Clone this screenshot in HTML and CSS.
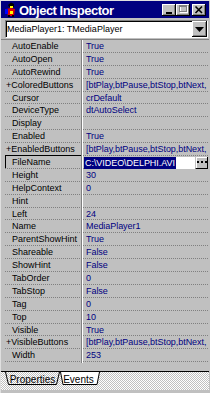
FILE: index.html
```html
<!DOCTYPE html>
<html>
<head>
<meta charset="utf-8">
<link rel="stylesheet" href="styles.css">
</head>
<body>
<div class="win">
  <div class="titlebar">
    <svg class="ticon" width="15" height="15" viewBox="0 0 15 15">
      <path d="M5 3 L8 0.5 L11 2 L11 5 L6 5 Z" fill="#000"/>
      <rect x="7" y="4" width="3" height="2" fill="#ff0"/>
      <path d="M3 7 L8 6 L12 7 L11 14 L5 14 Z" fill="#e00000"/>
      <rect x="2" y="7" width="3" height="5" fill="#0000ff"/>
      <rect x="7" y="9" width="3" height="3" fill="#ff0"/>
      <rect x="5" y="13" width="2" height="2" fill="#000"/>
      <rect x="9" y="13" width="2" height="2" fill="#000"/>
    </svg>
    <span class="title">Object Inspector</span>
    <div class="tbtns">
      <span class="tb"><svg width="14" height="12" viewBox="0 0 14 12"><rect x="4" y="8" width="6" height="2" fill="#000"/></svg></span>
      <span class="tb"><svg width="14" height="12" viewBox="0 0 14 12"><rect x="4.5" y="2.5" width="7" height="6" fill="none" stroke="#fff"/><rect x="3.5" y="1.5" width="7" height="6" fill="none" stroke="#808080"/><line x1="3" y1="2.5" x2="11" y2="2.5" stroke="#808080"/></svg></span>
      <span class="tb tb-close"><svg width="14" height="12" viewBox="0 0 14 12"><path d="M3.5 2.5 L10 9 M10 2.5 L3.5 9" stroke="#000" stroke-width="1.6"/></svg></span>
    </div>
  </div>
  <div class="combo-row">
    <div class="combo">
      <span class="combo-text">MediaPlayer1: TMediaPlayer</span>
      <span class="drop"><svg width="9" height="5" viewBox="0 0 9 5"><path d="M0 0 H9 L4.5 5 Z" fill="#000"/></svg></span>
    </div>
  </div>
  <div class="grid">
    <div class="row"><div class="name">AutoEnable</div><div class="val">True</div></div>
    <div class="row"><div class="name">AutoOpen</div><div class="val">True</div></div>
    <div class="row"><div class="name">AutoRewind</div><div class="val">True</div></div>
    <div class="row"><div class="name exp">+ColoredButtons</div><div class="val">[btPlay,btPause,btStop,btNext,</div></div>
    <div class="row"><div class="name">Cursor</div><div class="val">crDefault</div></div>
    <div class="row"><div class="name">DeviceType</div><div class="val">dtAutoSelect</div></div>
    <div class="row"><div class="name">Display</div><div class="val"></div></div>
    <div class="row"><div class="name">Enabled</div><div class="val">True</div></div>
    <div class="row"><div class="name exp">+EnabledButtons</div><div class="val">[btPlay,btPause,btStop,btNext,</div></div>
    <div class="row sel"><div class="name">FileName</div><div class="val"><div class="editor"><div class="edit"><span class="hl">C:\VIDEO\DELPHI.AVI</span></div><span class="ell"><svg width="10" height="3" viewBox="0 0 10 3"><rect x="0" y="0" width="2" height="2" fill="#000"/><rect x="4" y="0" width="2" height="2" fill="#000"/><rect x="8" y="0" width="2" height="2" fill="#000"/></svg></span></div></div></div>
    <div class="row"><div class="name">Height</div><div class="val">30</div></div>
    <div class="row"><div class="name">HelpContext</div><div class="val">0</div></div>
    <div class="row"><div class="name">Hint</div><div class="val"></div></div>
    <div class="row"><div class="name">Left</div><div class="val">24</div></div>
    <div class="row"><div class="name">Name</div><div class="val">MediaPlayer1</div></div>
    <div class="row"><div class="name">ParentShowHint</div><div class="val">True</div></div>
    <div class="row"><div class="name">Shareable</div><div class="val">False</div></div>
    <div class="row"><div class="name">ShowHint</div><div class="val">False</div></div>
    <div class="row"><div class="name">TabOrder</div><div class="val">0</div></div>
    <div class="row"><div class="name">TabStop</div><div class="val">False</div></div>
    <div class="row"><div class="name">Tag</div><div class="val">0</div></div>
    <div class="row"><div class="name">Top</div><div class="val">10</div></div>
    <div class="row"><div class="name">Visible</div><div class="val">True</div></div>
    <div class="row"><div class="name exp">+VisibleButtons</div><div class="val">[btPlay,btPause,btStop,btNext,</div></div>
    <div class="row"><div class="name">Width</div><div class="val">253</div></div>
  </div>
  <div class="gap"></div>
  <div class="tabbar">
    <div class="tab tab-props">
      <svg width="55" height="13" viewBox="0 0 55 13"><polyline points="0.5,0 3.5,12.5 51.5,12.5 54.5,0" fill="none" stroke="#000"/></svg>
      <span class="tab-label">Properties</span>
    </div>
    <div class="tab tab-events">
      <svg width="40" height="13" viewBox="0 0 40 13"><polygon points="0,0 3,12.5 37,12.5 40,0" fill="#fff"/><polyline points="0.5,0 3,12.5 37,12.5 39.5,0" fill="none" stroke="#000"/></svg>
      <span class="tab-label">Events</span>
    </div>
  </div>
</div>
</body>
</html>
```
FILE: styles.css
```css
* { box-sizing: border-box; }
html, body { margin: 0; padding: 0; }
body {
  width: 210px;
  height: 393px;
  overflow: hidden;
  background: #c0c0c0;
  font-family: "Liberation Sans", Arial, sans-serif;
}
.win {
  width: 210px;
  height: 393px;
  padding: 1px 1px 3px;
  display: flex;
  flex-direction: column;
  background: #c0c0c0;
  box-shadow: inset 1px 1px #dfdfdf;
}
.titlebar {
  flex: none;
  height: 17px;
  background: #000080;
  display: flex;
  align-items: center;
  padding: 0 3px 0 2px;
}
.ticon { flex: none; display: block; }
.title {
  flex: 1;
  margin-left: 1px;
  color: #fff;
  font-weight: bold;
  font-size: 13px;
  letter-spacing: -0.5px;
  height: 17px;
  line-height: 15px;
  padding-top: 2px;
  white-space: nowrap;
  overflow: hidden;
}
.tbtns { display: flex; flex: none; }
.tb {
  width: 14px;
  height: 12px;
  background: #c0c0c0;
  box-shadow: inset -1px -1px #000, inset 1px 1px #fff, inset -2px -2px #808080;
  display: flex;
}
.tb svg { display: block; }
.tb-close { margin-left: 2px; }

.combo-row {
  flex: none;
  height: 21px;
  padding: 2px 1px 1px 4px;
}
.combo {
  height: 18px;
  display: flex;
  border: 1px solid;
  border-color: #808080 #fff #fff #808080;
  background: #fff;
}
.combo-text {
  flex: 1;
  min-width: 0;
  font-size: 9px;
  line-height: 15px;
  padding: 1px 0 0 1px;
  box-shadow: inset 1px 1px #000;
  white-space: nowrap;
  overflow: hidden;
  color: #000;
}
.drop {
  width: 15px;
  flex: none;
  background: #c0c0c0;
  box-shadow: inset -1px -1px #000, inset 1px 1px #fff, inset -2px -2px #808080;
  display: flex;
  align-items: center;
  justify-content: center;
}
.drop svg { display: block; margin-left: -1px; }

.grid {
  flex: none;
  height: 323.5px;
  border-top: 1px solid #808080;
  padding: 0 1px 0 4px;
  overflow: hidden;
  background:
    linear-gradient(to right, transparent 80px, #808080 80px, #808080 81px, #fff 81px, #fff 82px, transparent 82px),
    #c0c0c0;
}
.row {
  display: flex;
  height: 12.9px;
  border-bottom: 1px dotted #808080;
}
.name {
  width: 76px;
  flex: none;
  padding-left: 7px;
  font-size: 9px;
  line-height: 13px;
  color: #000;
  white-space: nowrap;
  overflow: hidden;
}
.name.exp { padding-left: 1px; }
.val {
  flex: 1;
  min-width: 0;
  padding-left: 5px;
  font-size: 9px;
  line-height: 13px;
  color: #000080;
  white-space: nowrap;
  overflow: hidden;
  letter-spacing: -0.05px;
}
.row.sel .name {
  box-shadow: 0 -1px 0 #000, inset 1px 0 0 #000;
}
.row.sel .val {
  padding-left: 3px;
  overflow: visible;
  display: flex;
}
.editor {
  flex: 1;
  display: flex;
  margin-top: 1px;
  margin-bottom: -1px;
  height: 12px;
}
.edit {
  flex: 1;
  min-width: 0;
  background: #fff;
  overflow: hidden;
}
.hl {
  display: inline-block;
  vertical-align: top;
  background: #000080;
  color: #fff;
  height: 12px;
  padding: 1px 1px 0;
  line-height: 11px;
  font-size: 9px;
}
.ell {
  width: 12px;
  flex: none;
  margin-left: 1px;
  background: #c0c0c0;
  box-shadow: inset -1px -1px #000, inset 1px 1px #fff;
  display: flex;
  align-items: center;
  justify-content: center;
}
.ell svg { display: block; margin-top: -2px; }

.gap { flex: none; height: 8.5px; }
.tabbar {
  flex: none;
  height: 19px;
  border-top: 1px solid #000;
  background: repeating-conic-gradient(#c0c0c0 0 25%, #fff 0 50%) 0 0 / 2px 2px;
  display: flex;
  align-items: flex-start;
  padding-left: 4px;
}
.tab {
  position: relative;
  height: 13px;
  font-size: 10px;
  line-height: 12px;
  padding-top: 2px;
  text-align: center;
  color: #000;
  white-space: nowrap;
}
.tab svg {
  position: absolute;
  left: 0;
  top: 0;
  display: block;
}
.tab-label { position: relative; }
.tab-props { width: 55px; }
.tab-events { width: 40px; padding-right: 3px; }
```
